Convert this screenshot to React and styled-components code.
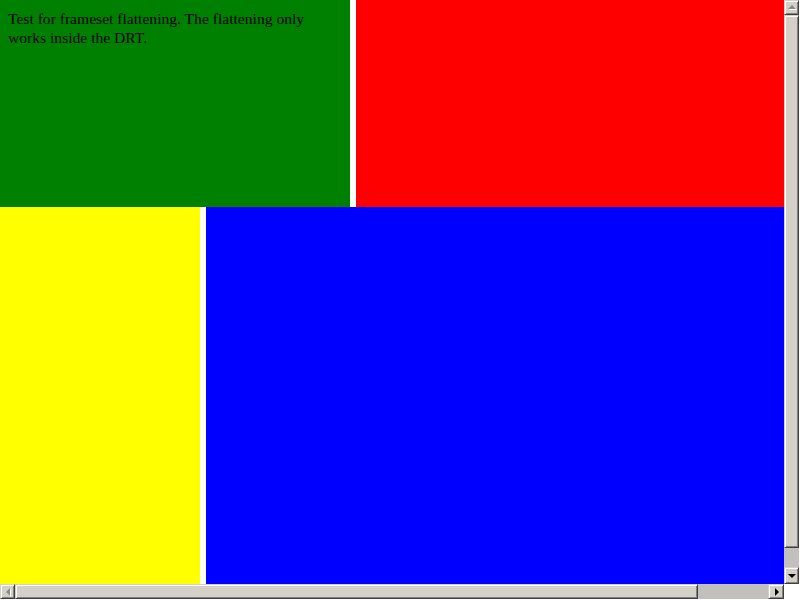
import React from "react";
import styled, { createGlobalStyle, css } from "styled-components";

const Global = createGlobalStyle`
  html, body { margin: 0; padding: 0; background: #ffffff; overflow: hidden; }
  #root { width: 800px; height: 600px; }
`;

const Viewport = styled.div`
  width: 800px;
  height: 600px;
  display: grid;
  grid-template-columns: 784px 15px 1px;
  grid-template-rows: 584px 15px 1px;
  background: #ffffff;
`;

const Frameset = styled.div`
  display: grid;
  grid-template-rows: 207px 377px;
  overflow: hidden;
`;

const Row = styled.div`
  display: grid;
  grid-template-columns: ${(p) => p.$left}px 1fr;
  column-gap: 6px;
  background: #ffffff;
`;

const Frame = styled.div`
  background: ${(p) => p.$color};
  overflow: hidden;
  padding: 8px;
  box-sizing: border-box;
  font-family: "Liberation Serif", "Times New Roman", serif;
  font-size: 15.6px;
  line-height: 19px;
  color: #000000;
`;

const Text = styled.p`
  margin: 1px 0 0 0;
  width: 320px;
`;

const bevel = css`
  box-sizing: border-box;
  background: #d4d0c8;
  border-top: 1px solid #d4d0c8;
  border-left: 1px solid #d4d0c8;
  border-right: 1px solid #404040;
  border-bottom: 1px solid #404040;
  box-shadow: inset 1px 1px 0 #ffffff, inset -1px -1px 0 #808080;
`;

const VBar = styled.div`
  display: flex;
  flex-direction: column;
  background: #c2c0bc;
`;

const HBar = styled.div`
  display: flex;
  flex-direction: row;
  background: #c2c0bc;
`;

const Button = styled.div`
  ${bevel};
  flex: 0 0 ${(p) => p.$size}px;
  display: flex;
  align-items: center;
  justify-content: center;
`;

const Thumb = styled.div`
  ${bevel};
  flex: 0 0 ${(p) => p.$size}px;
`;

const Track = styled.div`
  flex: 1;
`;

const arrowColor = (p) => (p.$disabled ? "#8a8a88" : "#000000");

const Arrow = styled.div`
  width: 0;
  height: 0;
  ${(p) =>
    p.$dir === "up" &&
    css`
      border-left: 4px solid transparent;
      border-right: 4px solid transparent;
      border-bottom: 4px solid ${arrowColor(p)};
      margin-top: -1px;
      ${p.$disabled && "filter: drop-shadow(1px 1px 0 #ffffff);"}
    `}
  ${(p) =>
    p.$dir === "down" &&
    css`
      border-left: 4px solid transparent;
      border-right: 4px solid transparent;
      border-top: 4px solid ${arrowColor(p)};
    `}
  ${(p) =>
    p.$dir === "left" &&
    css`
      border-top: 4px solid transparent;
      border-bottom: 4px solid transparent;
      border-right: 4px solid ${arrowColor(p)};
      ${p.$disabled && "filter: drop-shadow(1px 1px 0 #ffffff);"}
    `}
  ${(p) =>
    p.$dir === "right" &&
    css`
      border-top: 4px solid transparent;
      border-bottom: 4px solid transparent;
      border-left: 4px solid ${arrowColor(p)};
      margin-left: 1px;
    `}
`;

const Corner = styled.div`
  background: #ffffff;
`;

export default function App() {
  return (
    <>
      <Global />
      <Viewport>
        <Frameset>
          <Row $left={350}>
            <Frame $color="#008000">
              <Text>
                Test for frameset flattening. The flattening only works inside
                the DRT.
              </Text>
            </Frame>
            <Frame $color="#ff0000" />
          </Row>
          <Row $left={200}>
            <Frame $color="#ffff00" />
            <Frame $color="#0000ff" />
          </Row>
        </Frameset>
        <VBar>
          <Button $size={15}>
            <Arrow $dir="up" $disabled />
          </Button>
          <Thumb $size={533} />
          <Track />
          <Button $size={17}>
            <Arrow $dir="down" />
          </Button>
        </VBar>
        <Corner />
        <HBar>
          <Button $size={15}>
            <Arrow $dir="left" $disabled />
          </Button>
          <Thumb $size={683} />
          <Track />
          <Button $size={16}>
            <Arrow $dir="right" />
          </Button>
        </HBar>
        <Corner />
        <Corner />
        <Corner />
        <Corner />
        <Corner />
      </Viewport>
    </>
  );
}
